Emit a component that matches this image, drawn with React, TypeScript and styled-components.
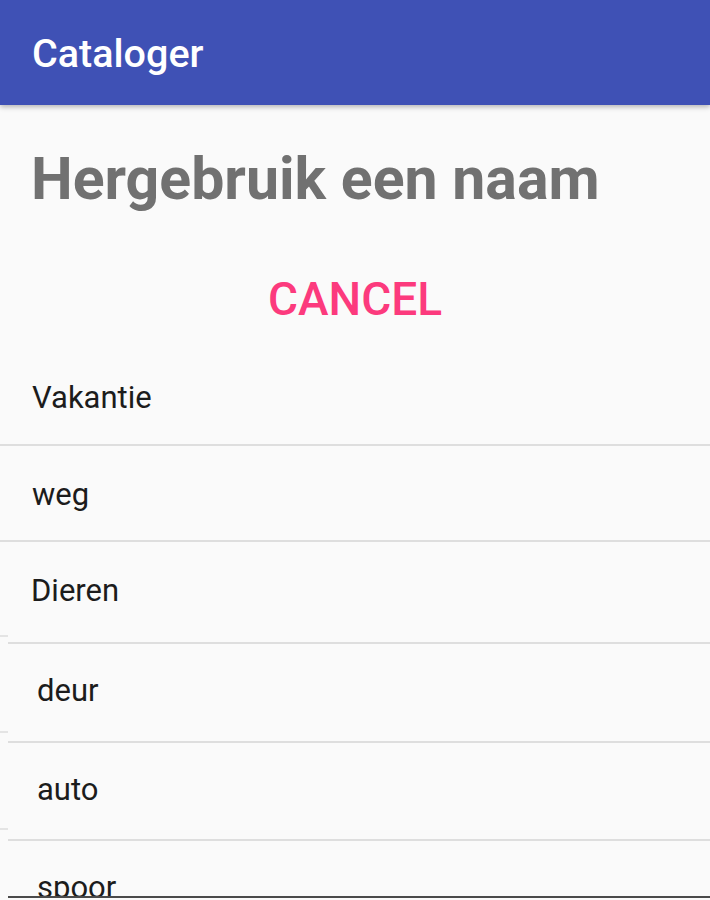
import styled, { createGlobalStyle } from 'styled-components';

const GlobalStyle = createGlobalStyle`
  html, body {
    margin: 0;
    padding: 0;
    height: 900px;
    overflow: hidden;
    background: #fafafa;
    font-family: Roboto, "Noto Sans", sans-serif;
  }
`;

const names = ['deur', 'auto', 'spoor'];

const App = () => (
  <>
    <GlobalStyle />
    <Screen>
      <AppBar>
        <AppTitle>Cataloger</AppTitle>
      </AppBar>

      <Heading>Hergebruik een naam</Heading>

      <CancelRow>
        <CancelButton type="button">CANCEL</CancelButton>
      </CancelRow>

      <List>
        <Row>Vakantie</Row>
        <Row $bottom={27}>weg</Row>

        <Lower>
          <StubColumn>
            <Stub $h={95} />
            <Stub $h={96} />
            <Stub $h={97} />
          </StubColumn>

          <ShiftedList>
            <Row $indent={23} $bottom={33}>Dieren</Row>
            {names.map((n, i) => (
              <Row key={n} $indent={29} $top={29} $bottom={i === 0 ? 32 : 31}>
                {n}
              </Row>
            ))}
          </ShiftedList>
        </Lower>
      </List>
    </Screen>
  </>
);

export default App;

const Screen = styled.div`
  width: 710px;
  height: 900px;
  display: flex;
  flex-direction: column;
  overflow: hidden;
`;

const AppBar = styled.header`
  height: 105px;
  box-sizing: border-box;
  padding: 31px 0 0 32px;
  background: #3f51b5;
  box-shadow: 0 2px 5px rgba(0, 0, 0, 0.28);
  position: relative;
  z-index: 1;
`;

const AppTitle = styled.h1`
  margin: 0;
  color: #ffffff;
  font-size: 39.5px;
  line-height: 46px;
  font-weight: 500;
`;

const Heading = styled.h2`
  margin: 39px 0 0 31px;
  color: #717171;
  font-size: 59px;
  line-height: 70px;
  font-weight: 700;
  white-space: nowrap;
`;

const CancelRow = styled.div`
  display: flex;
  justify-content: center;
  margin-top: 58px;
`;

const CancelButton = styled.button`
  border: none;
  background: transparent;
  padding: 0;
  color: #fc3a7d;
  font-family: Roboto, sans-serif;
  font-size: 46px;
  line-height: 54px;
  font-weight: 500;
  cursor: pointer;
`;

const List = styled.div`
  margin-top: 23px;
  display: flex;
  flex-direction: column;
`;

const Row = styled.div<{ $indent?: number; $top?: number; $bottom?: number }>`
  padding: ${(p) => p.$top ?? 31}px 0 ${(p) => p.$bottom ?? 28}px ${(p) => p.$indent ?? 32}px;
  font-size: 31px;
  line-height: 36px;
  color: #1c1c1c;
  border-bottom: 2px solid #dedede;
  white-space: nowrap;
`;

const Lower = styled.div`
  display: grid;
  grid-template-columns: 8px 1fr;
  align-items: start;
`;

const StubColumn = styled.div`
  display: flex;
  flex-direction: column;
`;

const Stub = styled.div<{ $h: number }>`
  height: ${(p) => p.$h}px;
  box-sizing: border-box;
  border-bottom: 2px solid #e4e4e4;
`;

const ShiftedList = styled.div`
  height: 356px;
  box-sizing: border-box;
  overflow: hidden;
  border-bottom: 2px solid #4a4a4a;
  display: flex;
  flex-direction: column;
`;
